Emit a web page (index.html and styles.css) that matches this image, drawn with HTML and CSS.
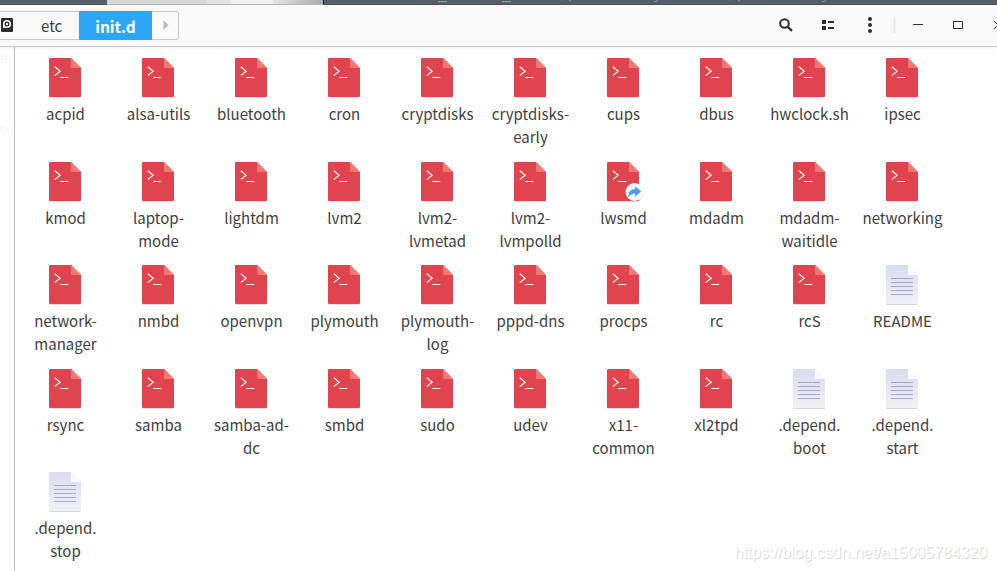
FILE: index.html
```
<!DOCTYPE html>
<html lang="en">
<head>
<meta charset="utf-8">
<title>init.d</title>
<link rel="stylesheet" href="styles.css">
</head>
<body>
<svg class="defs" aria-hidden="true">
  <defs>
    <linearGradient id="paper" x1="0" y1="0" x2="0" y2="1"><stop offset="0" stop-color="#d9dcef"/><stop offset="1" stop-color="#f1f1f7"/></linearGradient>
    <symbol id="script" viewBox="0 0 34 42">
      <path d="M2 1h21l10 10v28q0 1-1 1H2q-1 0-1-1V2q0-1 1-1z" fill="#000" opacity=".12"/>
      <path d="M2 0h21l10 10v28q0 1-1 1H2q-1 0-1-1V1q0-1 1-1z" fill="#df444f"/>
      <path d="M23 0l10 10H24q-1 0-1-1z" fill="#ff756f"/>
      <path d="M6.800 8.800l5.400 4.400-5.400 4.400M12.300 19.500h8" fill="none" stroke="#fff" stroke-width="1.100"/>
    </symbol>
    <symbol id="text" viewBox="0 0 34 42">
      <path d="M2 1h21l10 10v28q0 1-1 1H2q-1 0-1-1V2q0-1 1-1z" fill="#000" opacity=".15"/>
      <path d="M2 0h21l10 10v28q0 1-1 1H2q-1 0-1-1V1q0-1 1-1z" fill="url(#paper)"/>
      <path d="M23 0l10 10H24q-1 0-1-1z" fill="#fafafd"/>
      <path d="M6 13.500h22M6 17.500h22M6 21.500h22M6 25.500h22M6 29.500h22" stroke="#aaa5c9" fill="none"/>
    </symbol>
  </defs>
</svg>
<div class="backdrop">
  <div class="editor-left"></div>
  <div class="tabs"><i></i><i></i><i></i><i></i></div>
  <svg class="editor-right" viewBox="0 0 673 5" width="673" height="5">
    <path d="M114 1.500h9M178 1.500h9" stroke="#2ddc86" fill="none"/>
    <path d="M237 0h1v1h-1zM405 0h1v1h-1z" fill="#4b8fe0"/>
    <path d="M245 0l2 1.500M333.500 0l-1 1.500h-2M414 0l2 1.500M502 0l-1.500 1.500h-2" stroke="#55b5d5" fill="none"/>
  </svg>
</div>
<header class="toolbar">
  <nav class="path">
    <span class="disk"><svg width="13" height="14" viewBox="0 0 13 14"><rect x="1" width="12" height="14" rx="1" fill="#2d2d2d"/><path d="M3 10V6a4 4 0 1 1 4 4z" fill="#fff"/><circle cx="7" cy="6" r="2.500" fill="#2d2d2d"/><circle cx="7" cy="6" r="1.200" fill="#fff"/></svg></span>
    <span class="crumb">etc</span>
    <span class="crumb current">init.d</span>
    <span class="next"><svg width="6" height="10" viewBox="0 0 6 10"><path d="M.5 0l5 5-5 5z" fill="#b7bac7"/></svg></span>
  </nav>
  <svg class="controls" width="223" height="41" viewBox="774 5 223 41" fill="none" stroke="#2d2d2d">
    <circle cx="784.500" cy="23.500" r="4.300" stroke-width="2"/><path d="M787.700 26.700l4.200 4.200" stroke-width="2.200"/>
    <path d="M822 20h4v4h-4zM822 26h4v4h-4zM828 21h6v2h-6zM828 27h6v2h-6z" fill="#2d2d2d" stroke="none"/>
    <g fill="#2d2d2d" stroke="none"><circle cx="870" cy="19" r="2"/><circle cx="870" cy="25" r="2"/><circle cx="870" cy="31" r="2"/></g>
    <path d="M894.500 18v15" stroke="#d9dae3"/>
    <path d="M913 24.500h10M953.500 21.500h9v7h-9z"/>
    <path d="M994 21l8 8M994 29l8-8"/>
  </svg>
</header>
<main class="window">
  <aside class="sidebar"><span>LI</span><span>E/e</span></aside>
  <section class="files">
    <figure><svg><use href="#script"/></svg><figcaption>acpid</figcaption></figure>
    <figure><svg><use href="#script"/></svg><figcaption>alsa-utils</figcaption></figure>
    <figure><svg><use href="#script"/></svg><figcaption>bluetooth</figcaption></figure>
    <figure><svg><use href="#script"/></svg><figcaption>cron</figcaption></figure>
    <figure><svg><use href="#script"/></svg><figcaption>cryptdisks</figcaption></figure>
    <figure><svg><use href="#script"/></svg><figcaption>cryptdisks-<br>early</figcaption></figure>
    <figure><svg><use href="#script"/></svg><figcaption>cups</figcaption></figure>
    <figure><svg><use href="#script"/></svg><figcaption>dbus</figcaption></figure>
    <figure><svg><use href="#script"/></svg><figcaption>hwclock.sh</figcaption></figure>
    <figure><svg><use href="#script"/></svg><figcaption>ipsec</figcaption></figure>

    <figure><svg><use href="#script"/></svg><figcaption>kmod</figcaption></figure>
    <figure><svg><use href="#script"/></svg><figcaption>laptop-<br>mode</figcaption></figure>
    <figure><svg><use href="#script"/></svg><figcaption>lightdm</figcaption></figure>
    <figure><svg><use href="#script"/></svg><figcaption>lvm2</figcaption></figure>
    <figure><svg><use href="#script"/></svg><figcaption>lvm2-<br>lvmetad</figcaption></figure>
    <figure><svg><use href="#script"/></svg><figcaption>lvm2-<br>lvmpolld</figcaption></figure>
    <figure><svg viewBox="0 0 34 42"><use href="#script" width="34" height="42"/><circle cx="28.500" cy="30.800" r="9" fill="#000" opacity=".12"/><circle cx="28.500" cy="30" r="9" fill="#fff"/><path d="M22.500 35.500c-.5-5 1.500-8.500 6.500-8.500v-3l6.200 5.500-6.200 5.200v-3.200c-3 0-5 1.200-6.500 4z" fill="#4a9eff"/></svg><figcaption>lwsmd</figcaption></figure>
    <figure><svg><use href="#script"/></svg><figcaption>mdadm</figcaption></figure>
    <figure><svg><use href="#script"/></svg><figcaption>mdadm-<br>waitidle</figcaption></figure>
    <figure><svg><use href="#script"/></svg><figcaption>networking</figcaption></figure>

    <figure><svg><use href="#script"/></svg><figcaption>network-<br>manager</figcaption></figure>
    <figure><svg><use href="#script"/></svg><figcaption>nmbd</figcaption></figure>
    <figure><svg><use href="#script"/></svg><figcaption>openvpn</figcaption></figure>
    <figure><svg><use href="#script"/></svg><figcaption>plymouth</figcaption></figure>
    <figure><svg><use href="#script"/></svg><figcaption>plymouth-<br>log</figcaption></figure>
    <figure><svg><use href="#script"/></svg><figcaption>pppd-dns</figcaption></figure>
    <figure><svg><use href="#script"/></svg><figcaption>procps</figcaption></figure>
    <figure><svg><use href="#script"/></svg><figcaption>rc</figcaption></figure>
    <figure><svg><use href="#script"/></svg><figcaption>rcS</figcaption></figure>
    <figure><svg><use href="#text"/></svg><figcaption>README</figcaption></figure>

    <figure><svg><use href="#script"/></svg><figcaption>rsync</figcaption></figure>
    <figure><svg><use href="#script"/></svg><figcaption>samba</figcaption></figure>
    <figure><svg><use href="#script"/></svg><figcaption>samba-ad-<br>dc</figcaption></figure>
    <figure><svg><use href="#script"/></svg><figcaption>smbd</figcaption></figure>
    <figure><svg><use href="#script"/></svg><figcaption>sudo</figcaption></figure>
    <figure><svg><use href="#script"/></svg><figcaption>udev</figcaption></figure>
    <figure><svg><use href="#script"/></svg><figcaption>x11-<br>common</figcaption></figure>
    <figure><svg><use href="#script"/></svg><figcaption>xl2tpd</figcaption></figure>
    <figure><svg><use href="#text"/></svg><figcaption>.depend.<br>boot</figcaption></figure>
    <figure><svg><use href="#text"/></svg><figcaption>.depend.<br>start</figcaption></figure>

    <figure><svg><use href="#text"/></svg><figcaption>.depend.<br>stop</figcaption></figure>
  </section>
</main>
<div class="watermark">https://blog.csdn.net/a15005784320</div>
</body>
</html>
```
FILE: styles.css
```
* { box-sizing: border-box; }
body {
  margin: 0;
  width: 997px;
  height: 571px;
  overflow: hidden;
  background: #fff;
  color: #404040;
  font: 15px/23px "Noto Sans CJK SC", "Noto Sans", sans-serif;
}
.defs { position: absolute; width: 0; height: 0; }
.backdrop { display: flex; height: 5px; background: #565e68; box-shadow: inset 0 -1px #4b535d; }
.editor-left { width: 107px; }
.tabs { display: flex; width: 217px; background: #ddd; border-right: 1px solid #111; border-bottom: 1px solid #bbb; }
.tabs i { width: 100px; background: #d6d6d6; }
.tabs i:nth-child(2) { width: 24px; background: #e3e3e3; }
.tabs i:nth-child(3) { width: 42px; background: #f0f0f0; }
.tabs i:nth-child(4) { width: 50px; background: linear-gradient(90deg, #e4e4e4, #aaa); }
.toolbar {
  position: relative;
  display: flex;
  align-items: center;
  justify-content: space-between;
  height: 42px;
  padding-bottom: 1px;
  background: #fafafa;
  border-bottom: 1px solid #cdced6;
  box-shadow: 0 1px 3px rgba(0, 0, 0, .07);
}
.path {
  display: flex;
  width: 179px;
  height: 29px;
  border: 1px solid #c8c8c8;
  border-left: 0;
  border-radius: 0 3px 3px 0;
}
.disk { width: 25px; padding: 6px 0 0; line-height: 0; }
.crumb { width: 54px; padding-left: 16px; line-height: 28px; }
.current {
  width: 73px;
  margin: -1px 0;
  padding: 0;
  background: #2ca7f8;
  color: #fff;
  font-size: 15.5px;
  font-weight: 700;
  line-height: 30px;
  text-align: center;
}
.next { flex: 1; padding: 8px 0 0 11px; line-height: 0; }
.controls { display: block; }
.window { display: flex; height: 524px; }
.sidebar {
  display: flex;
  flex-direction: column;
  gap: 54px;
  width: 15px;
  border-right: 1px solid #bfbfbf;
  color: #f3f3f3;
  font-size: 9px;
}
.sidebar span { white-space: nowrap; line-height: 20px; }
.files {
  display: grid;
  grid-template-columns: repeat(10, 93px);
  grid-auto-rows: 103.5px;
  padding: 11px 0 0 4px;
}
figure { margin: 0; text-align: center; }
figure svg { display: block; width: 34px; height: 42px; margin: 0 auto 2px 29px; overflow: visible; }
figcaption { white-space: nowrap; }
.watermark {
  position: absolute;
  right: 10px;
  bottom: 7px;
  color: #fff;
  font: 15.900px/23px "Liberation Sans", sans-serif;
  text-shadow: 1px 1px 1px #d2d2d2;
}
```
